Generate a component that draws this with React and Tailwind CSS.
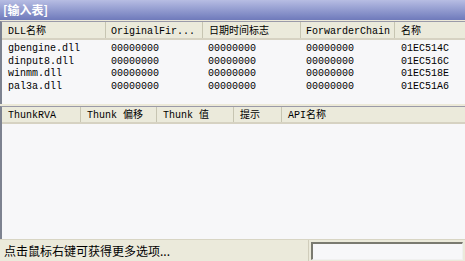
import React from "react";

const mono = { fontFamily: '"Liberation Mono", "Noto Sans CJK SC", monospace' };

function Cell({ w, children, className = "" }) {
  return (
    <div className={`shrink-0 overflow-hidden whitespace-nowrap ${className}`} style={{ width: w }}>
      {children}
    </div>
  );
}

function HeaderCell({ w, children, last, pl = 6 }) {
  return (
    <div
      className={`shrink-0 h-full flex items-center pt-[2px] whitespace-nowrap overflow-hidden ${last ? "" : "border-r border-r-[#c7c5b2]"}`}
      style={{ width: w, paddingLeft: pl }}
    >
      {children}
    </div>
  );
}

const upperCols = [104, 97, 98, 94, 72];
const lowerCols = [79, 76, 77, 48, 120];

const rows = [
  ["gbengine.dll", "00000000", "00000000", "00000000", "01EC514C"],
  ["dinput8.dll", "00000000", "00000000", "00000000", "01EC516C"],
  ["winmm.dll", "00000000", "00000000", "00000000", "01EC518E"],
  ["pal3a.dll", "00000000", "00000000", "00000000", "01EC51A6"],
];

export default function App() {
  return (
    <div
      className="w-[465px] h-[261px] bg-[#ece9d8] flex flex-col overflow-hidden text-[10px] text-black"
      style={mono}
    >
      <div className="h-[20px] shrink-0 bg-gradient-to-b from-[#b7bde3] to-[#6f7abb] flex items-center pl-[3px]">
        <span className="text-white text-[12px] font-bold" style={{ fontFamily: '"Noto Sans CJK SC", sans-serif' }}>
          [输入表]
        </span>
      </div>
      <div className="h-[1px] shrink-0 bg-[#ece9d8]" />
      {/* upper list */}
      <div className="h-[83px] shrink-0 flex flex-col bg-[#f7f7f9] border-l-[2px] border-l-[#7d8290] border-t border-t-[#9a9aa8]">
        <div className="h-[18px] shrink-0 flex bg-[#ebeadb] border-b-[2px] border-b-[#d6d2c2]">
          <HeaderCell w={upperCols[0]}>DLL名称</HeaderCell>
          <HeaderCell w={upperCols[1]} pl={5}>OriginalFir...</HeaderCell>
          <HeaderCell w={upperCols[2]}>日期时间标志</HeaderCell>
          <HeaderCell w={upperCols[3]} pl={5}>ForwarderChain</HeaderCell>
          <HeaderCell w={upperCols[4]} last>名称</HeaderCell>
        </div>
        <div className="pt-[3px] flex flex-col">
          {rows.map((r, i) => (
            <div key={i} className="h-[12.5px] flex items-center leading-[12px]">
              <Cell w={upperCols[0]} className="pl-[6px]">{r[0]}</Cell>
              <Cell w={upperCols[1]} className="pl-[5px]">{r[1]}</Cell>
              <Cell w={upperCols[2]} className="pl-[5px]">{r[2]}</Cell>
              <Cell w={upperCols[3]} className="pl-[5px]">{r[3]}</Cell>
              <Cell w={upperCols[4]} className="pl-[6px]">{r[4]}</Cell>
            </div>
          ))}
        </div>
      </div>
      <div className="h-[2px] shrink-0 bg-[#ece9d8]" />
      {/* lower list */}
      <div className="flex-1 flex flex-col bg-[#f7f7f9] border-l-[2px] border-l-[#7d8290] border-t border-t-[#9a9aa8]">
        <div className="h-[17px] shrink-0 flex bg-[#ebeadb] border-b-[2px] border-b-[#d6d2c2]">
          <HeaderCell w={lowerCols[0]}>ThunkRVA</HeaderCell>
          <HeaderCell w={lowerCols[1]}>Thunk 偏移</HeaderCell>
          <HeaderCell w={lowerCols[2]}>Thunk 值</HeaderCell>
          <HeaderCell w={lowerCols[3]}>提示</HeaderCell>
          <HeaderCell w={lowerCols[4]} last>API名称</HeaderCell>
          <div className="flex-1" />
        </div>
      </div>
      {/* status bar */}
      <div className="h-[22px] shrink-0 flex items-center bg-[#ebeadb] border-t border-t-[#d8d5c4]">
        <div
          className="flex-1 h-full flex items-center pl-[4px] text-[12px] border-r border-r-[#d0cdbb]"
          style={{ fontFamily: '"Noto Sans CJK SC", sans-serif' }}
        >
          点击鼠标右键可获得更多选项...
        </div>
        <div className="w-[152px] h-[18px] ml-[2px] mr-[2px] bg-[#f7f7f9] border-t-[2px] border-l-[2px] border-t-[#7a7a70] border-l-[#7a7a70] border-b border-r border-b-[#f0f0f0] border-r-[#f0f0f0]" />
      </div>
    </div>
  );
}
